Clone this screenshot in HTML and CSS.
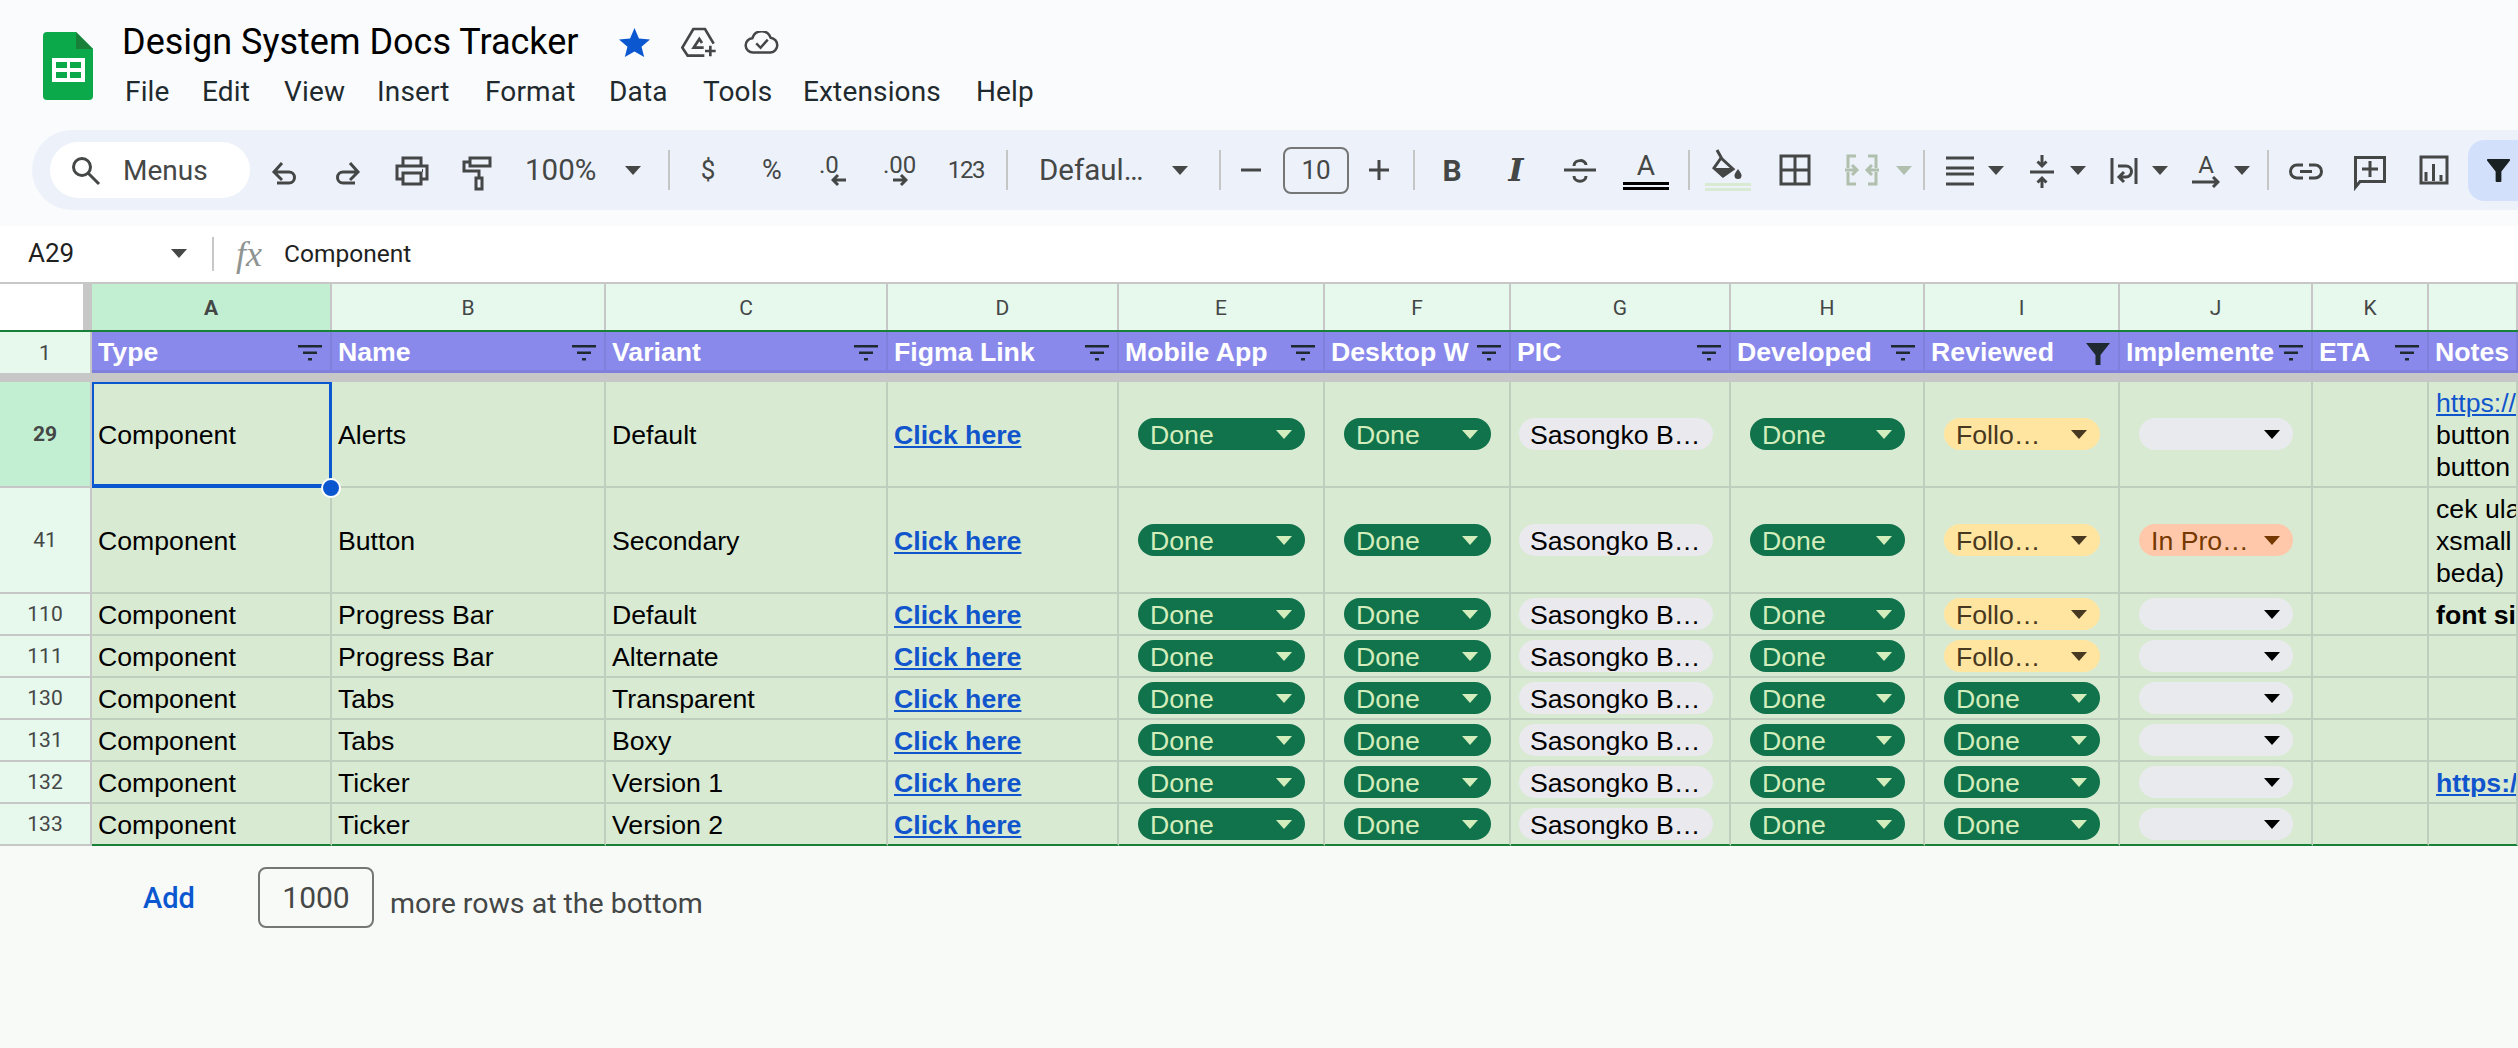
FILE: index.html
```html
<!DOCTYPE html>
<html lang="en">
<head>
<meta charset="utf-8">
<title>Design System Docs Tracker</title>
<link rel="stylesheet" href="styles.css">
</head>
<body>
<svg class="defs" aria-hidden="true">
  <symbol id="f" viewBox="0 0 24 24"><path d="M0 3h24v2.4H0zM5 9.5h14v2.4H5zM10 16h4v2.4h-4z"/></symbol>
  <symbol id="ff" viewBox="0 0 24 24"><path d="M0 1h24L14.5 13v10h-5V13z"/></symbol>
</svg>
<header class="top">
  <svg class="logo" viewBox="0 0 50 68"><path d="M4 0h29l17 17v47a4 4 0 0 1-4 4H4a4 4 0 0 1-4-4V4a4 4 0 0 1 4-4z" fill="#0ba94a"/><path d="M33 0l17 17H33z" fill="#188038"/><path d="M9 26h33v24H9z" fill="#fff"/><path d="M13 30h11v6H13zM27 30h11v6H27zM13 40h11v6H13zM27 40h11v6H27z" fill="#0ba94a"/></svg>
  <div class="titles">
    <div class="titleline">
      <h1 class="doc">Design System Docs Tracker</h1>
      <svg class="t-star" viewBox="0 0 32 30"><path d="M16 0l4.6 10.8 11.4 1-8.7 7.6 2.7 10.6L16 24.4 6 30l2.7-10.6L0 11.8l11.4-1z" fill="#0b57d0"/></svg>
      <svg class="t-drive" viewBox="0 0 105 90" fill="none" stroke="#444746" stroke-width="8"><path d="M98 50L72 6H37L4 62l16 24h50"/><path d="M68 62H38l17-26 8 12"/><path d="M88 56v32M72 72h32"/></svg>
      <svg class="t-cloud" viewBox="0 0 36 24" fill="none" stroke="#444746" stroke-width="2.6"><path d="M9 22.500a7.500 7.500 0 0 1-1-15A10 10 0 0 1 27 7a7.800 7.800 0 0 1 0 15.500z"/><path d="M12 13l4.500 4.500L24 9"/></svg>
    </div>
    <nav class="menu">
      <span class="m m1">File</span><span class="m m2">Edit</span><span class="m m3">View</span><span class="m m4">Insert</span><span class="m m5">Format</span><span class="m m6">Data</span><span class="m m7">Tools</span><span class="m m8">Extensions</span><span class="m">Help</span>
    </nav>
  </div>
</header>

<div class="toolbar">
  <div class="search">
    <svg class="ic" viewBox="0 0 48 48"><circle cx="20" cy="21" r="8.500"/><path d="M26.500 27.500L37 38"/></svg>
    <span class="search-t">Menus</span>
  </div>
  <div class="btn"><svg class="ic" viewBox="0 0 48 48"><path d="M22 17l-8 9 8 8M14 26h15a5.500 5.500 0 0 1 0 11H17"/></svg></div>
  <div class="btn"><svg class="ic" viewBox="0 0 48 48"><path d="M26 17l8 9-8 8M34 26H19a5.500 5.500 0 0 0 0 11h12"/></svg></div>
  <div class="btn"><svg class="ic" viewBox="0 0 48 48"><path d="M15 20v-8h18v8M15 33H9V20h30v13h-6M15 27h18v11H15z"/><path d="M34 24.500h1"/></svg></div>
  <div class="btn"><svg class="ic" viewBox="0 0 48 48"><path d="M18 12h20v8H18zM18 16h-6v9h15v7M24 32h6v11h-6z"/></svg></div>
  <div class="sel zoom"><span>100%</span><i class="caret"></i></div>
  <i class="sep"></i>
  <div class="btn txt">$</div>
  <div class="btn txt pct">%</div>
  <div class="btn dec"><span class="dec-t">.0</span><svg class="dec-a" viewBox="0 0 16 14"><path d="M7 2L2 7l5 5M2 7h13"/></svg></div>
  <div class="btn dec"><span class="dec-t">.00</span><svg class="dec-a" viewBox="0 0 16 14"><path d="M9 2l5 5-5 5M14 7H1"/></svg></div>
  <div class="btn num">123</div>
  <i class="sep"></i>
  <div class="sel font"><span>Defaul…</span><i class="caret"></i></div>
  <i class="sep"></i>
  <div class="btn pm"><svg class="ic" viewBox="0 0 48 48"><path d="M14 24h20"/></svg></div>
  <div class="sizebox">10</div>
  <div class="btn pm"><svg class="ic" viewBox="0 0 48 48"><path d="M14 24h20M24 14v20"/></svg></div>
  <i class="sep sep-b"></i>
  <div class="btn bold">B</div>
  <div class="btn ital">I</div>
  <div class="btn"><svg class="ic" viewBox="0 0 48 48"><path d="M8 24h32"/><path d="M18 20c0-7 12-7 12-1M18 30c0 7 12 7 12 0"/></svg></div>
  <div class="btn colorA"><span class="a-t">A</span><i class="a-bar"></i></div>
  <i class="sep"></i>
  <div class="btn fill"><svg class="ic ic-fill" viewBox="0 0 48 32"><path d="M13 1l5 9M17 9l-7 10 9 8 10-7z"/><path class="solid" d="M10 19l9 8 10-8z"/><path class="solid" d="M34 20c2.500 3.500 3.500 5 3.500 6.500a3.500 3.500 0 0 1-7 0c0-1.500 1-3 3.500-6.500z"/></svg><i class="fill-bar"></i></div>
  <div class="btn"><svg class="ic" viewBox="0 0 48 48"><path d="M10 10h28v28H10zM24 10v28M10 24h28"/></svg></div>
  <div class="btn merge"><svg class="ic" viewBox="0 0 48 48"><path d="M10 22v-12h8M30 10h8v12M10 26v12h8M30 38h8V26"/><path d="M7 24h12M14 19l5 5-5 5M41 24H29M34 19l-5 5 5 5"/></svg></div>
  <i class="caret muted"></i>
  <i class="sep sep-a"></i>
  <div class="group"><svg class="ic" viewBox="0 0 48 48"><path d="M10 12h28M10 22h28M10 28h28M10 38h28"/></svg><i class="caret"></i></div>
  <div class="group"><svg class="ic" viewBox="0 0 48 48"><path d="M12 26h24M24 9v11M19.500 15.500L24 20l4.500-4.500M24 42V32M19.500 36.500L24 32l4.500 4.500"/></svg><i class="caret"></i></div>
  <div class="group"><svg class="ic" viewBox="0 0 48 48"><path d="M12 12v26M36 12v26M18 20h8a5 5 0 0 1 0 11h-6M24 26l-5 5 5 5"/></svg><i class="caret"></i></div>
  <div class="group"><span class="rot"><span class="a-t">A</span><svg class="rot-a" viewBox="0 0 28 12"><path d="M0 6h26M21 1l5 5-5 5"/></svg></span><i class="caret"></i></div>
  <i class="sep"></i>
  <div class="btn"><svg class="ic" viewBox="0 0 48 48"><path d="M21 19h-6a6.500 6.500 0 0 0 0 13h6M27 19h6a6.500 6.500 0 0 1 0 13h-6M18 25.500h12"/></svg></div>
  <div class="btn"><svg class="ic" viewBox="0 0 48 48"><path d="M9.500 41V11.500h29v24H14zM24 15v16M16 23h16"/></svg></div>
  <div class="btn"><svg class="ic" viewBox="0 0 48 48"><path d="M11 11h26v26H11zM16 26v9M23.500 18v17M31 29v6"/></svg></div>
  <div class="btn filter"><svg class="fi-big" viewBox="0 0 24 24"><path d="M1 0h22a1 1 0 0 1 1 1.500L15 13v10a1 1 0 0 1-1 1h-4a1 1 0 0 1-1-1V13L0 1.500A1 1 0 0 1 1 0z"/></svg></div>
</div>

<div class="formula">
  <div class="namebox"><span>A29</span><i class="caret"></i></div>
  <i class="fsep"></i>
  <span class="fx">fx</span>
  <span class="ftext">Component</span>
</div>

<main class="sheet">
  <div class="row colhead">
    <div class="corner"></div>
    <div class="ch sel-ch">A</div><div class="ch">B</div><div class="ch">C</div><div class="ch">D</div><div class="ch">E</div><div class="ch">F</div><div class="ch">G</div><div class="ch">H</div><div class="ch">I</div><div class="ch">J</div><div class="ch">K</div><div class="ch"></div>
  </div>
  <div class="row head">
    <div class="rh">1</div>
    <div class="hc"><span>Type</span><svg class="fi"><use href="#f"/></svg></div>
    <div class="hc"><span>Name</span><svg class="fi"><use href="#f"/></svg></div>
    <div class="hc"><span>Variant</span><svg class="fi"><use href="#f"/></svg></div>
    <div class="hc"><span>Figma Link</span><svg class="fi"><use href="#f"/></svg></div>
    <div class="hc"><span>Mobile App</span><svg class="fi"><use href="#f"/></svg></div>
    <div class="hc"><span>Desktop W</span><svg class="fi"><use href="#f"/></svg></div>
    <div class="hc"><span>PIC</span><svg class="fi"><use href="#f"/></svg></div>
    <div class="hc"><span>Developed</span><svg class="fi"><use href="#f"/></svg></div>
    <div class="hc"><span>Reviewed</span><svg class="fi"><use href="#ff"/></svg></div>
    <div class="hc"><span>Implemente</span><svg class="fi"><use href="#f"/></svg></div>
    <div class="hc"><span>ETA</span><svg class="fi"><use href="#f"/></svg></div>
    <div class="hc"><span>Notes</span></div>
  </div>
  <div class="freeze"></div>

  <div class="row tall">
    <div class="rh rh-sel">29</div>
    <div class="c active">Component<i class="handle"></i></div><div class="c">Alerts</div><div class="c">Default</div><div class="c"><a class="lnk">Click here</a></div>
    <div class="c p"><span class="chip done">Done<i class="caret"></i></span></div>
    <div class="c p"><span class="chip done">Done<i class="caret"></i></span></div>
    <div class="c pg"><span class="chip person">Sasongko B…</span></div>
    <div class="c p"><span class="chip done">Done<i class="caret"></i></span></div>
    <div class="c p"><span class="chip follow">Follo…<i class="caret"></i></span></div>
    <div class="c p"><span class="chip empty"><i class="caret"></i></span></div>
    <div class="c"></div>
    <div class="c notes"><a class="plain">https://a</a><span>button</span><span>button</span></div>
  </div>
  <div class="row tall">
    <div class="rh">41</div>
    <div class="c">Component</div><div class="c">Button</div><div class="c">Secondary</div><div class="c"><a class="lnk">Click here</a></div>
    <div class="c p"><span class="chip done">Done<i class="caret"></i></span></div>
    <div class="c p"><span class="chip done">Done<i class="caret"></i></span></div>
    <div class="c pg"><span class="chip person">Sasongko B…</span></div>
    <div class="c p"><span class="chip done">Done<i class="caret"></i></span></div>
    <div class="c p"><span class="chip follow">Follo…<i class="caret"></i></span></div>
    <div class="c p"><span class="chip prog">In Pro…<i class="caret"></i></span></div>
    <div class="c"></div>
    <div class="c notes"><span>cek ulang</span><span>xsmall</span><span>beda)</span></div>
  </div>
  <div class="row short">
    <div class="rh">110</div>
    <div class="c">Component</div><div class="c">Progress Bar</div><div class="c">Default</div><div class="c"><a class="lnk">Click here</a></div>
    <div class="c p"><span class="chip done">Done<i class="caret"></i></span></div>
    <div class="c p"><span class="chip done">Done<i class="caret"></i></span></div>
    <div class="c pg"><span class="chip person">Sasongko B…</span></div>
    <div class="c p"><span class="chip done">Done<i class="caret"></i></span></div>
    <div class="c p"><span class="chip follow">Follo…<i class="caret"></i></span></div>
    <div class="c p"><span class="chip empty"><i class="caret"></i></span></div>
    <div class="c"></div>
    <div class="c strong notes-one">font size</div>
  </div>
  <div class="row short">
    <div class="rh">111</div>
    <div class="c">Component</div><div class="c">Progress Bar</div><div class="c">Alternate</div><div class="c"><a class="lnk">Click here</a></div>
    <div class="c p"><span class="chip done">Done<i class="caret"></i></span></div>
    <div class="c p"><span class="chip done">Done<i class="caret"></i></span></div>
    <div class="c pg"><span class="chip person">Sasongko B…</span></div>
    <div class="c p"><span class="chip done">Done<i class="caret"></i></span></div>
    <div class="c p"><span class="chip follow">Follo…<i class="caret"></i></span></div>
    <div class="c p"><span class="chip empty"><i class="caret"></i></span></div>
    <div class="c"></div>
    <div class="c"></div>
  </div>
  <div class="row short">
    <div class="rh">130</div>
    <div class="c">Component</div><div class="c">Tabs</div><div class="c">Transparent</div><div class="c"><a class="lnk">Click here</a></div>
    <div class="c p"><span class="chip done">Done<i class="caret"></i></span></div>
    <div class="c p"><span class="chip done">Done<i class="caret"></i></span></div>
    <div class="c pg"><span class="chip person">Sasongko B…</span></div>
    <div class="c p"><span class="chip done">Done<i class="caret"></i></span></div>
    <div class="c p"><span class="chip done">Done<i class="caret"></i></span></div>
    <div class="c p"><span class="chip empty"><i class="caret"></i></span></div>
    <div class="c"></div>
    <div class="c"></div>
  </div>
  <div class="row short">
    <div class="rh">131</div>
    <div class="c">Component</div><div class="c">Tabs</div><div class="c">Boxy</div><div class="c"><a class="lnk">Click here</a></div>
    <div class="c p"><span class="chip done">Done<i class="caret"></i></span></div>
    <div class="c p"><span class="chip done">Done<i class="caret"></i></span></div>
    <div class="c pg"><span class="chip person">Sasongko B…</span></div>
    <div class="c p"><span class="chip done">Done<i class="caret"></i></span></div>
    <div class="c p"><span class="chip done">Done<i class="caret"></i></span></div>
    <div class="c p"><span class="chip empty"><i class="caret"></i></span></div>
    <div class="c"></div>
    <div class="c"></div>
  </div>
  <div class="row short">
    <div class="rh">132</div>
    <div class="c">Component</div><div class="c">Ticker</div><div class="c">Version 1</div><div class="c"><a class="lnk">Click here</a></div>
    <div class="c p"><span class="chip done">Done<i class="caret"></i></span></div>
    <div class="c p"><span class="chip done">Done<i class="caret"></i></span></div>
    <div class="c pg"><span class="chip person">Sasongko B…</span></div>
    <div class="c p"><span class="chip done">Done<i class="caret"></i></span></div>
    <div class="c p"><span class="chip done">Done<i class="caret"></i></span></div>
    <div class="c p"><span class="chip empty"><i class="caret"></i></span></div>
    <div class="c"></div>
    <div class="c notes-one"><a class="lnk">https://a</a></div>
  </div>
  <div class="row short last">
    <div class="rh">133</div>
    <div class="c">Component</div><div class="c">Ticker</div><div class="c">Version 2</div><div class="c"><a class="lnk">Click here</a></div>
    <div class="c p"><span class="chip done">Done<i class="caret"></i></span></div>
    <div class="c p"><span class="chip done">Done<i class="caret"></i></span></div>
    <div class="c pg"><span class="chip person">Sasongko B…</span></div>
    <div class="c p"><span class="chip done">Done<i class="caret"></i></span></div>
    <div class="c p"><span class="chip done">Done<i class="caret"></i></span></div>
    <div class="c p"><span class="chip empty"><i class="caret"></i></span></div>
    <div class="c"></div>
    <div class="c"></div>
  </div>
  <div class="addrow">
    <span class="add">Add</span>
    <span class="addbox">1000</span>
    <span class="addt">more rows at the bottom</span>
  </div>
</main>
</body>
</html>
```

FILE: styles.css
```css
* { box-sizing: border-box; }
html, body { margin: 0; height: 100%; }
body {
  width: 2518px; height: 1048px; overflow: hidden;
  background: #f9fbfd; color: #1f1f1f;
  font-family: Roboto, "Liberation Sans", sans-serif;
  display: flex; flex-direction: column;
}
.defs { display: none; }

/* title area */
.top { height: 130px; flex: none; display: flex; padding-left: 43px; }
.logo { width: 50px; height: 68px; margin-top: 32px; flex: none; }
.titles { margin-left: 29px; padding-top: 20px; }
.titleline { display: flex; align-items: center; height: 44px; }
.doc { margin: 0; font: 400 36px/44px Roboto, sans-serif; color: #000; width: 456px; white-space: nowrap; }
.t-star { width: 31px; height: 29px; margin-left: 41px; flex: none; }
.t-drive { width: 35px; height: 30px; margin-left: 31px; flex: none; }
.t-cloud { width: 36px; height: 23px; margin-left: 28px; flex: none; }
.menu { display: flex; margin-top: 8px; height: 40px; margin-left: 3px; font-size: 28px; line-height: 40px; color: #1f2a2e; letter-spacing: .15px; }
.m { display: block; flex: none; }
.m1 { width: 77px; } .m2 { width: 82px; } .m3 { width: 93px; } .m4 { width: 108px; }
.m5 { width: 124px; } .m6 { width: 94px; } .m7 { width: 100px; } .m8 { width: 173px; }

/* toolbar */
.toolbar {
  height: 80px; flex: none; margin-left: 32px; padding-left: 18px;
  background: #edf2fa; border-radius: 40px 0 0 40px;
  display: flex; align-items: center; color: #444746; white-space: nowrap;
}
.search { width: 200px; height: 56px; flex: none; background: #fff; border-radius: 28px; display: flex; align-items: center; padding-left: 12px; margin-right: 2px; }
.search-t { margin-left: 13px; font-size: 28px; color: #444746; }
.ic { width: 48px; height: 48px; fill: none; stroke: currentColor; stroke-width: 3; flex: none; }
.btn { width: 64px; height: 56px; flex: none; display: flex; align-items: center; justify-content: center; position: relative; }
.caret { display: block; flex: none; width: 0; height: 0; border-left: 8px solid transparent; border-right: 8px solid transparent; border-top: 9px solid currentColor; }
.sel { height: 56px; flex: none; display: flex; align-items: center; font-size: 29.500px; }
.zoom { width: 152px; padding-left: 17px; }
.zoom .caret { margin-left: 29px; }
.font { width: 197px; padding-left: 25px; }
.font .caret { margin-left: 29px; }
.sep { display: block; flex: none; width: 2px; height: 40px; background: #c4c7c5; margin: 0 6px 0 8px; }
.txt { font-size: 26px; }
.pct { font-size: 27px; }
.num { width: 68px; font-size: 24px; letter-spacing: -1.300px; }
.num + .sep { margin-left: 6px; }
.dec { display: block; }
.dec-t { position: absolute; left: 15px; top: 10px; font-size: 24px; line-height: 26px; }
.dec-a { position: absolute; left: 27px; top: 31px; width: 16px; height: 14px; fill: none; stroke: currentColor; stroke-width: 3; }
.dec + .dec .dec-a { left: 24px; }
.pm { width: 40px; margin-left: 4px; }
.pm + .sizebox { margin-left: 12px; }
.sizebox + .pm { margin-left: 10px; }
.pm + .sep { margin-left: 14px; margin-right: 5px; }
.sizebox { width: 66px; height: 47px; flex: none; border: 2px solid #747775; border-radius: 8px; text-align: center; line-height: 43px; font-size: 26px; }
.bold { font-weight: 700; font-size: 30px; }
.ital { font: italic 700 32px "DejaVu Serif", serif; }
.a-t { display: block; font-size: 24px; line-height: 24px; }
.colorA { flex-direction: column; margin-left: 2px; }
.colorA .a-t { font-size: 28px; line-height: 32px; }
.colorA + .sep { margin-left: 10px; }
.a-bar { display: block; width: 46px; height: 8px; border-top: 3px solid #000; border-bottom: 3px solid #000; }
.fill { flex-direction: column; }
.fill + .btn { margin-left: 3px; }
.ic-fill { height: 32px; }
.solid { fill: currentColor; stroke: none; }
.fill-bar { display: block; width: 46px; height: 8px; border-top: 3px solid #d9ead3; border-bottom: 3px solid #d9ead3; margin-top: 2px; }
.merge { margin-left: 3px; color: #b1c0ae; }
.muted { color: #b1c0ae; margin: 0 0 0 2px; }
.muted + .sep { margin-left: 11px; margin-right: 8px; }
.group { width: 82px; height: 56px; flex: none; display: flex; align-items: center; padding-left: 3px; }
.group .caret { margin-left: 4px; }
.rot { width: 48px; height: 48px; display: flex; flex-direction: column; align-items: center; flex: none; padding-top: 7px; }
.rot-a { width: 28px; height: 12px; fill: none; stroke: currentColor; stroke-width: 3; margin-top: -1px; }
.group + .sep { margin-left: 6px; margin-right: 5px; }
.filter { width: 60px; height: 61px; background: #d3e0fb; border-radius: 16px 0 0 16px; margin-left: 2px; justify-content: flex-start; padding-left: 19px; }
.fi-big { width: 23px; height: 23px; fill: #1a2123; flex: none; }

/* formula bar */
.formula { margin-top: 16px; height: 56px; flex: none; background: #fff; display: flex; align-items: center; color: #1f1f1f; }
.namebox { width: 212px; padding: 0 0 2px 28px; display: flex; align-items: center; font-size: 26px; flex: none; }
.namebox .caret { margin-left: 97px; color: #444746; }
.fsep { display: block; width: 2px; height: 34px; background: #c7c7c7; flex: none; }
.fx { margin-left: 22px; width: 48px; font: italic 400 36px "Liberation Serif", serif; color: #8e9491; flex: none; }
.ftext { font-size: 24.500px; padding-bottom: 2px; }

/* sheet */
.sheet { flex: 1; background: #f8faf8; border-top: 2px solid #c7c7c7; font-family: "Liberation Sans", Arial, sans-serif; font-size: 26.670px; color: #000; }
.row { display: grid; grid-template-columns: 92px 240px 274px 282px 231px 206px 186px 220px 194px 195px 193px 116px 89px; overflow: visible; }
.colhead { height: 48px; border-bottom: 2px solid #188038; }
.corner { background: #fff; border-right: 9px solid #c7c7c7; }
.ch { background: #e7f8ed; border-right: 2px solid #c7c7c7; display: flex; align-items: center; justify-content: center; font: 400 21px Roboto, sans-serif; color: #444746; padding-top: 2px; }
.sel-ch { background: #c2efd1; font-weight: 700; }
.head { height: 41px; }
.rh { background: #e7f8ed; border-right: 2px solid #c7c7c7; border-bottom: 2px solid #c7c7c7; display: flex; align-items: center; justify-content: center; font: 400 21px Roboto, sans-serif; color: #444746; }
.rh-sel { background: #c2efd1; font-weight: 700; }
.head .rh { border-bottom: 0; }
.hc { background: #8989eb; border-right: 2px solid #7f7fdc; border-bottom: 3px solid #7f7fdc; display: flex; align-items: center; padding: 2px 0 0 6px; color: #fff; font-weight: 700; white-space: nowrap; overflow: hidden; }
.hc span { overflow: hidden; flex: 0 1 auto; }
.fi { width: 24px; height: 24px; margin: 4px 8px 0 auto; flex: none; fill: #1f2a30; }
.freeze { height: 9px; background: #c7c7c7; }
.tall { height: 106px; }
.short { height: 42px; }
.c { background: #d9ead3; border-right: 2px solid #c0cfbd; border-bottom: 2px solid #c0cfbd; display: flex; align-items: center; padding: 2px 0 0 6px; white-space: nowrap; overflow: hidden; }
.last .c { border-bottom-color: #188038; }
.active { position: relative; overflow: visible; border-right-color: #0b57d0; border-bottom-color: #0b57d0; box-shadow: inset 2px 2px 0 #0b57d0, inset -1px -2px 0 #0b57d0; z-index: 2; }
.handle { position: absolute; width: 20px; height: 20px; right: -11px; bottom: -12px; background: #0b57d0; border: 2px solid #fff; border-radius: 50%; }
.lnk { color: #1155cc; font-weight: 700; text-decoration: underline; }
.plain { color: #1155cc; text-decoration: underline; }
.strong { font-weight: 700; }
.notes { flex-direction: column; align-items: flex-start; justify-content: center; line-height: 32px; padding-left: 7px; }
.notes-one { padding-left: 7px; }
.p { padding: 0 18px 0 19px; }
.pg { padding: 0 18px 0 8px; }
.chip { flex: 1; height: 32px; border-radius: 16px; display: flex; align-items: center; justify-content: space-between; padding: 2px 13px 0 12px; line-height: 30px; }
.chip .caret { margin-top: -2px; }
.done { background: #11734b; color: #d4edbc; }
.person { background: #e9e9ee; color: #000; padding-left: 11px; }
.follow { background: #ffe5a0; color: #473821; }
.prog { background: #ffc8aa; color: #753800; }
.empty { background: #e8eaed; color: #000; justify-content: flex-end; }

/* add rows */
.addrow { display: flex; align-items: flex-start; padding: 21px 0 0 143px; }
.add { width: 115px; margin-top: 11px; font: 500 29px/40px Roboto, sans-serif; color: #0b57d0; }
.addbox { width: 116px; height: 61px; border: 2px solid #747775; border-radius: 8px; text-align: center; font: 400 30px/58px Roboto, sans-serif; color: #444746; }
.addt { margin-left: 16px; margin-top: 17px; font: 400 28.500px/40px Roboto, sans-serif; color: #444746; white-space: nowrap; }
```
